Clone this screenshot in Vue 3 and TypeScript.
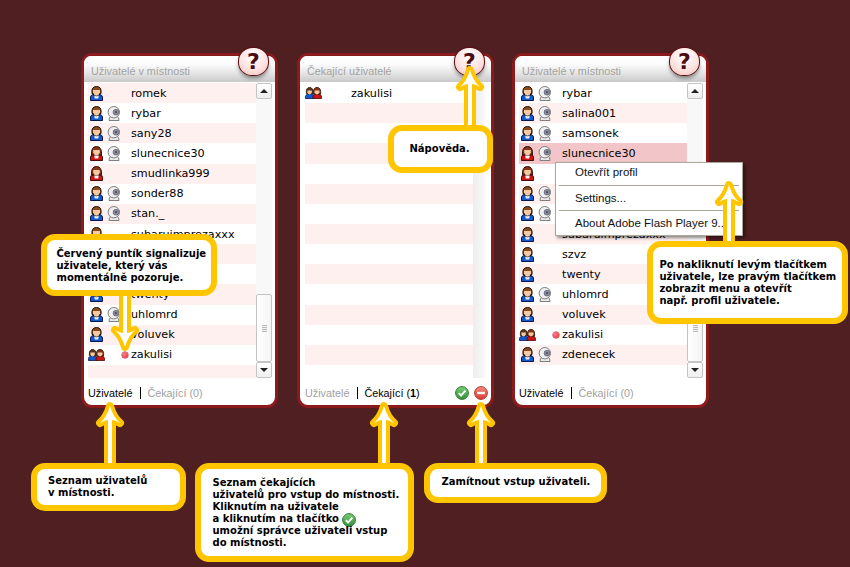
<script setup lang="ts">
interface Row { kind: 'blue' | 'red' | 'pair' | 'none'; cam?: boolean; dot?: boolean; name: string; sel?: boolean }
interface Panel { id: string; title: string; rows: Row[]; scroll: boolean; pinkFirst: boolean; active: 'users' | 'waiting'; waiting: number }

const panels: Panel[] = [
  {
    id: 'p1', title: 'Uživatelé v místnosti', scroll: true, pinkFirst: true, active: 'users', waiting: 0,
    rows: [
      { kind: 'blue', name: 'romek' },
      { kind: 'blue', cam: true, name: 'rybar' },
      { kind: 'blue', cam: true, name: 'sany28' },
      { kind: 'red', cam: true, name: 'slunecnice30' },
      { kind: 'red', name: 'smudlinka999' },
      { kind: 'blue', cam: true, name: 'sonder88' },
      { kind: 'blue', cam: true, name: 'stan._' },
      { kind: 'blue', name: 'subaruimprezaxxx' },
      { kind: 'none', name: '' },
      { kind: 'blue', name: 'szvz' },
      { kind: 'blue', name: 'twenty' },
      { kind: 'blue', cam: true, name: 'uhlomrd' },
      { kind: 'blue', name: 'voluvek' },
      { kind: 'pair', dot: true, name: 'zakulisi' },
      { kind: 'none', name: '' },
    ],
  },
  {
    id: 'p2', title: 'Čekající uživatelé', scroll: false, pinkFirst: false, active: 'waiting', waiting: 1,
    rows: [
      { kind: 'pair', name: 'zakulisi' },
      ...Array.from({ length: 14 }, (): Row => ({ kind: 'none', name: '' })),
    ],
  },
  {
    id: 'p3', title: 'Uživatelé v místnosti', scroll: true, pinkFirst: false, active: 'users', waiting: 0,
    rows: [
      { kind: 'blue', cam: true, name: 'rybar' },
      { kind: 'blue', cam: true, name: 'salina001' },
      { kind: 'blue', cam: true, name: 'samsonek' },
      { kind: 'red', cam: true, name: 'slunecnice30', sel: true },
      { kind: 'red', name: 'smudlinka999' },
      { kind: 'blue', cam: true, name: 'sonder88' },
      { kind: 'blue', cam: true, name: 'stan._' },
      { kind: 'blue', name: 'subaruimprezaxxx' },
      { kind: 'blue', name: 'szvz' },
      { kind: 'blue', name: 'twenty' },
      { kind: 'blue', cam: true, name: 'uhlomrd' },
      { kind: 'blue', name: 'voluvek' },
      { kind: 'pair', dot: true, name: 'zakulisi' },
      { kind: 'blue', cam: true, name: 'zdenecek' },
    ],
  },
]

function arrow(x: number, tip: number, end: number): string {
  const s = end > tip ? 1 : -1
  const y = tip + 5 * s
  return `M${x} ${y} Q${x + 3} ${y + 11 * s} ${x + 10} ${y + 17 * s} Q${x + 5} ${y + 14 * s} ${x + 2} ${y + 14 * s} V${end} H${x - 2} V${y + 14 * s} Q${x - 5} ${y + 14 * s} ${x - 10} ${y + 17 * s} Q${x - 3} ${y + 11 * s} ${x} ${y} Z`
}

const arrows: string[] = [
  arrow(110, 401, 466),
  arrow(384, 401, 466),
  arrow(481, 401, 466),
  arrow(470, 65, 128),
  arrow(729, 180, 244),
  arrow(125, 352, 292),
]
</script>

<template>
  <main class="page">
    <svg width="0" height="0" class="defs" aria-hidden="true">
      <defs>
        <symbol id="user-blue" viewBox="0 0 13 15">
          <path d="M.5 14.5 V11 Q.8 9 3 8.5 H10 Q12.2 9 12.5 11 V14.5 Z" fill="#1258d0" stroke="#08184a" />
          <path d="M4 8.5 H9 L8.2 12.5 H4.8 Z" fill="#f4f4f4" />
          <path d="M2 7.5 Q1 .5 6.5 .5 Q12 .5 11 7.5 Z" fill="#8a4a1c" stroke="#1a1008" />
          <path d="M3 4 H10 V6.5 Q9 9.4 6.5 9.4 Q4 9.4 3 6.5 Z" fill="#f6c9a2" />
          <path d="M3 9 Q6.5 10.8 10 9" fill="none" stroke="#1a1008" stroke-width=".7" />
        </symbol>
        <symbol id="user-red" viewBox="0 0 13 15">
          <path d="M.5 14.5 V11 Q.8 9 3 8.5 H10 Q12.2 9 12.5 11 V14.5 Z" fill="#cc1414" stroke="#4a0808" />
          <path d="M4 8.5 H9 L8.2 12.5 H4.8 Z" fill="#f4f4f4" />
          <path d="M1.6 9 Q.8 .5 6.5 .5 Q12.2 .5 11.4 9 Z" fill="#8a3418" stroke="#260c06" />
          <path d="M3.2 4 H9.8 V6.5 Q9 9.2 6.5 9.2 Q4 9.2 3.2 6.5 Z" fill="#f6c9a2" />
        </symbol>
        <symbol id="user-pair" viewBox="0 0 17 12">
          <path d="M.5 11.5 V9.5 Q.7 7.5 3 7 H7 Q9 7.5 9 9.5 V11.5 Z" fill="#1258d0" stroke="#08184a" stroke-width=".8" />
          <path d="M8 11.5 V9.5 Q8.2 7.5 10 7 H14 Q16.3 7.5 16.5 9.5 V11.5 Z" fill="#cc1414" stroke="#4a0808" stroke-width=".8" />
          <path d="M1.4 6.5 Q.8 .4 4.6 .4 Q8.4 .4 7.8 6.5 Z" fill="#5e3212" stroke="#1a1008" stroke-width=".8" />
          <path d="M2.4 3.4 H6.8 V5.6 Q6 7.6 4.6 7.6 Q3.2 7.6 2.4 5.6 Z" fill="#f6c9a2" />
          <path d="M8.4 7 Q7.8 .4 12 .4 Q16.2 .4 15.6 7 Z" fill="#8a3418" stroke="#260c06" stroke-width=".8" />
          <path d="M9.6 3.4 H14.4 V5.6 Q13.4 7.6 12 7.6 Q10.6 7.6 9.6 5.6 Z" fill="#f6c9a2" />
        </symbol>
        <symbol id="cam" viewBox="0 0 14 15">
          <path d="M2 14.5 Q1.6 11 4.5 10 H9.5 Q12.4 11 12 14.5 Z" fill="#eaeaea" stroke="#7e7e7e" />
          <circle cx="6.8" cy="6.2" r="5.7" fill="#f0f0f0" stroke="#7e7e7e" />
          <circle cx="9" cy="6.2" r="2.9" fill="#8d8f9e" stroke="#5c5e70" stroke-width=".7" />
          <circle cx="9" cy="6.2" r="1.1" fill="#4e4f62" />
        </symbol>
        <linearGradient id="g-ok" x1="0" y1="0" x2="0" y2="1">
          <stop offset="0" stop-color="#7ed07a" />
          <stop offset="1" stop-color="#2e8f36" />
        </linearGradient>
        <linearGradient id="g-no" x1="0" y1="0" x2="0" y2="1">
          <stop offset="0" stop-color="#f58a80" />
          <stop offset="1" stop-color="#d83a30" />
        </linearGradient>
        <symbol id="ok" viewBox="0 0 14 14">
          <circle cx="7" cy="7" r="6.4" fill="url(#g-ok)" stroke="#2f7a34" />
          <path d="M3.8 7.2 L6 9.6 L10.4 4.6" fill="none" stroke="#fff" stroke-width="1.9" />
        </symbol>
        <symbol id="no" viewBox="0 0 14 14">
          <circle cx="7" cy="7" r="6.4" fill="url(#g-no)" stroke="#b53a32" />
          <rect x="3.2" y="5.8" width="7.6" height="2.4" fill="#fff" />
        </symbol>
      </defs>
    </svg>

    <section v-for="p in panels" :key="p.id" class="panel" :class="p.id">
      <header class="head">{{ p.title }}</header>
      <div class="help"><span>?</span></div>
      <div class="body">
        <ul class="list" :class="{ 'pink-first': p.pinkFirst }">
          <li v-for="(r, i) in p.rows" :key="i" class="row" :class="{ sel: r.sel }">
            <span class="ico">
              <svg v-if="r.kind === 'blue'" class="user"><use href="#user-blue" /></svg>
              <svg v-else-if="r.kind === 'red'" class="user"><use href="#user-red" /></svg>
              <svg v-else-if="r.kind === 'pair'" class="pair"><use href="#user-pair" /></svg>
            </span>
            <span class="ico2">
              <svg v-if="r.cam" class="cam"><use href="#cam" /></svg>
              <i v-if="r.dot" class="dot"></i>
            </span>
            <span class="name">{{ r.name }}</span>
          </li>
        </ul>
        <div class="scroll" :class="{ bare: !p.scroll }">
          <template v-if="p.scroll">
            <div class="btn"><i class="tri up"></i></div>
            <div class="track"></div>
            <div class="thumb"><i class="grip"></i></div>
            <div class="btn"><i class="tri down"></i></div>
          </template>
        </div>
      </div>
      <footer class="foot">
        <span class="tab" :class="{ on: p.active === 'users' }">Uživatelé</span>
        <span class="sep"></span>
        <span class="tab" :class="{ on: p.active === 'waiting' }">Čekající (<b v-if="p.waiting">{{ p.waiting }}</b><template v-else>{{ p.waiting }}</template>)</span>
        <span v-if="p.waiting" class="actions">
          <svg class="act"><use href="#ok" /></svg>
          <svg class="act"><use href="#no" /></svg>
        </span>
      </footer>
    </section>

    <div class="menu">
      <div class="mi">Otevřít profil</div>
      <hr />
      <div class="mi">Settings...</div>
      <hr />
      <div class="mi">About Adobe Flash Player 9...</div>
    </div>

    <svg class="arrows" width="850" height="567" aria-hidden="true">
      <path v-for="(d, i) in arrows" :key="i" :d="d" fill="#fff" stroke="#ffc600" stroke-width="8" stroke-linejoin="round" paint-order="stroke" />
    </svg>

    <div class="note n-dot">Červený puntík signalizuje<br />uživatele, který vás<br />momentálně pozoruje.</div>
    <div class="note n-list">Seznam uživatelů<br />v místnosti.</div>
    <div class="note n-wait">Seznam čekajících<br />uživatelů pro vstup do místnosti.<br />Kliknutím na uživatele<br />a kliknutím na tlačítko <svg class="inl"><use href="#ok" /></svg><br />umožní správce uživateli vstup<br />do místnosti.</div>
    <div class="note n-deny">Zamítnout vstup uživateli.</div>
    <div class="note n-help">Nápověda.</div>
    <div class="note n-menu">Po nakliknutí levým tlačítkem<br />uživatele, lze pravým tlačítkem<br />zobrazit menu a otevřít<br />např. profil uživatele.</div>
  </main>
</template>

<style>
html, body { margin: 0; background: #4f1f22; }
</style>

<style scoped>
.page {
  position: relative;
  box-sizing: border-box;
  width: 850px;
  height: 567px;
  overflow: hidden;
  background: #4f1f22;
  display: flex;
  align-items: flex-start;
  padding: 53px 0 0 81px;
  font-family: "DejaVu Sans", sans-serif;
}
.defs { position: absolute; }

.panel {
  position: relative;
  box-sizing: border-box;
  width: 197px;
  height: 355px;
  flex: none;
  background: #fff;
  border: 3px solid #8b1a1d;
  border-radius: 11px;
  display: flex;
  flex-direction: column;
}
.p1 { margin-right: 19px; }
.p2 { margin-right: 18px; }

.head {
  height: 26px;
  box-sizing: border-box;
  padding: 7px 0 0 7px;
  border-radius: 7px 7px 0 0;
  background: linear-gradient(#fff 0%, #fcfcfc 30%, #e6e6e6 65%, #c9c9c9 100%);
  color: #a3a3a3;
  font-family: "Liberation Sans", sans-serif;
  font-size: 10.8px;
  line-height: 16px;
}
.help {
  position: absolute;
  top: -9px;
  right: 6px;
  width: 29px;
  height: 27px;
  border: 1.5px solid #5c1014;
  border-radius: 48% 48% 46% 46%;
  background: radial-gradient(circle at 50% 30%, #fff 0%, #fde4e2 55%, #f3bfba 100%);
  box-shadow: 0 3px 4px -1px rgba(0, 0, 0, .45);
  text-align: center;
}
.help span {
  color: #4a0c12;
  font: 900 22px/27px "DejaVu Sans", sans-serif;
}

.body {
  display: flex;
  padding: 1px 0 0 4px;
  height: 295px;
  box-sizing: content-box;
}
.p2 .body { padding-left: 5px; }
.list {
  width: 168px;
  height: 295px;
  margin: 0;
  padding: 0;
  list-style: none;
  overflow: hidden;
}
.row {
  display: flex;
  align-items: center;
  height: 20.15px;
  background: #fff;
  font-size: 11.2px;
  color: #000;
  white-space: nowrap;
}
.list .row:nth-child(even) { background: #fff0f0; }
.list.pink-first .row:nth-child(even) { background: #fff; }
.list.pink-first .row:nth-child(odd) { background: #fff0f0; }
.list .row.sel, .list.pink-first .row.sel { background: #f2c6c8; }
.ico { width: 18px; display: flex; padding-left: 2px; flex: none; }
.ico2 { width: 23px; display: flex; align-items: center; flex: none; }
.p2 .ico2 { width: 26px; }
.user { width: 13px; height: 15px; display: block; }
.pair { width: 17px; height: 12px; display: block; margin-left: -2px; }
.cam { width: 14px; height: 15px; display: block; margin-left: -1px; }
.dot {
  width: 6px;
  height: 6px;
  margin-left: 14px;
  border-radius: 50%;
  background: radial-gradient(circle at 40% 40%, #ff8a8a, #d81828);
  box-shadow: 0 0 0 .5px #a82030;
}

.scroll {
  width: 16px;
  height: 295px;
  display: flex;
  flex-direction: column;
  position: relative;
}
.scroll.bare {
  background: linear-gradient(90deg, #eee, #f6f6f6 70%, #fff);
  width: 14px;
}
.btn {
  height: 16px;
  box-sizing: border-box;
  border: 1px solid #c4c4c4;
  border-radius: 2px;
  background: linear-gradient(#fff, #eee);
  display: flex;
  align-items: center;
  justify-content: center;
}
.track {
  flex: 1;
  background: #f8f8f8;
}
.thumb {
  height: 68px;
  box-sizing: border-box;
  border: 1px solid #c4c4c4;
  border-radius: 2px;
  background: linear-gradient(90deg, #fff, #f4f4f4);
  display: flex;
  align-items: center;
  justify-content: center;
}
.grip { width: 5px; height: 7px; background: repeating-linear-gradient(#bbb 0 1px, #eee 1px 2px); }
.tri { width: 0; height: 0; border-left: 4px solid transparent; border-right: 4px solid transparent; }
.tri.up { border-bottom: 4px solid #222; }
.tri.down { border-top: 4px solid #222; }

.foot {
  flex: 1;
  display: flex;
  align-items: center;
  padding: 2px 3px 0 4px;
  font-family: "Liberation Sans", sans-serif;
  font-size: 10.8px;
  color: #9f9f9f;
}
.p2 .foot { padding-left: 5px; }
.tab.on { color: #000; }
.sep { width: 1px; height: 12px; background: #000; margin: 0 6px 0 8px; }
.actions { margin-left: auto; display: flex; gap: 5px; }
.act { width: 14px; height: 14px; display: block; }

.menu {
  position: absolute;
  left: 555px;
  top: 162px;
  width: 188px;
  height: 74px;
  box-sizing: border-box;
  padding: 0 3px;
  background: #fff;
  border: 1px solid #aca899;
  box-shadow: 2px 2px 3px rgba(0, 0, 0, .45);
  font-family: "Liberation Sans", sans-serif;
  font-size: 11.5px;
  color: #111;
}
.mi { height: 19.5px; line-height: 19px; padding-left: 16px; white-space: nowrap; }
.menu hr { margin: 2px 0 3px; border: 0; border-top: 1px solid #aca899; }

.arrows { position: absolute; left: 0; top: 0; }

.note {
  position: absolute;
  box-sizing: border-box;
  background: #fff;
  border: 6.5px solid #ffc600;
  border-radius: 14px;
  color: #000;
  font: 700 10px/12px "DejaVu Sans", sans-serif;
  white-space: nowrap;
}
.n-dot { left: 41px; top: 234px; width: 176px; height: 62px; padding: 8px 0 0 9.5px; }
.n-list { left: 31px; top: 463px; width: 155px; height: 48px; padding: 6px 0 0 11px; }
.n-wait { left: 195px; top: 463px; width: 219px; height: 99px; padding: 7.5px 0 0 11.5px; }
.n-deny { left: 424px; top: 463px; width: 183px; height: 40px; padding: 7px 0 0 11.5px; }
.n-help { left: 388px; top: 125px; width: 105px; height: 48px; padding: 11.5px 0 0 15.5px; }
.n-menu { left: 647px; top: 241px; width: 201px; height: 83px; padding: 12px 0 0 6.5px; }
.inl { width: 14px; height: 14px; vertical-align: -3px; margin: -2px 0 -2px 0; }
</style>
